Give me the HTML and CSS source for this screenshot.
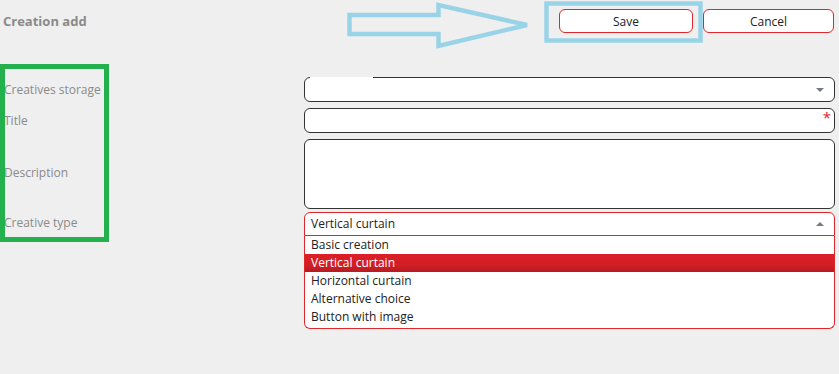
FILE: index.html
```html
<!DOCTYPE html>
<html lang="en">
<head>
  <meta charset="UTF-8">
  <title>Creation add</title>
  <link rel="stylesheet" href="styles.css">
</head>
<body>
  <div class="page">
    <header class="top">
      <h1>Creation add</h1>
      <div class="actions">
        <button class="btn">Save</button>
        <button class="btn">Cancel</button>
      </div>
    </header>

    <form class="form">
      <label class="label">Creatives storage</label>
      <div class="field select storage"><span class="arrow down"></span></div>

      <label class="label">Title</label>
      <div class="field input"><span class="required">*</span></div>

      <label class="label">Description</label>
      <div class="field textarea"></div>

      <label class="label label-top">Creative type</label>
      <div class="combo">
        <div class="field select open">Vertical curtain<span class="arrow up"></span></div>
        <ul class="options">
          <li>Basic creation</li>
          <li class="selected">Vertical curtain</li>
          <li>Horizontal curtain</li>
          <li>Alternative choice</li>
          <li>Button with image</li>
        </ul>
      </div>
    </form>

    <svg class="marks" width="839" height="374" viewBox="0 0 839 374">
      <polygon points="349.5,15 438.5,15 438.5,5 527,25 438.5,46 438.5,34 349.5,34" />
      <rect x="546.5" y="3.5" width="154" height="37" />
      <rect class="green" x="2.5" y="66.5" width="104" height="173" />
    </svg>
  </div>
</body>
</html>
```

FILE: styles.css
```css
body, html {
  margin: 0;
  padding: 0;
  background: #efefef;
  font-family: "Open Sans", "Liberation Sans", sans-serif;
  font-size: 12px;
  color: #222;
}

.page {
  position: relative;
  width: 839px;
  height: 374px;
  padding: 9px 4px 0 4px;
  box-sizing: border-box;
}

.top {
  display: flex;
  align-items: center;
  justify-content: space-between;
}

.top h1 {
  margin: 0 0 0 -1px;
  font-size: 13px;
  font-weight: bold;
  color: #8a8a8a;
}

.actions {
  display: flex;
  gap: 10px;
  margin-right: 1px;
}

.btn {
  height: 24px;
  width: 134px;
  padding: 0;
  border: 1px solid #e0252b;
  border-radius: 6px;
  background: #fff;
  font-family: inherit;
  font-size: 12px;
  color: #222;
}

.btn + .btn {
  width: 131px;
}

.form {
  display: grid;
  grid-template-columns: 300px 1fr;
  align-items: center;
  row-gap: 6px;
  margin-top: 44px;
}

.label {
  color: #8a8a8a;
}

.label-top {
  align-self: start;
  padding-top: 2px;
}

.field {
  position: relative;
  box-sizing: border-box;
  background: #fff;
  border: 1px solid #333;
  border-radius: 6px;
  height: 25px;
}

.storage::after {
  content: "";
  position: absolute;
  left: 5px;
  top: -1px;
  width: 63px;
  height: 1px;
  background: #fff;
}

.textarea {
  height: 70px;
  margin-bottom: -3px;
}

.select.open {
  height: 24px;
  border-color: #e0252b;
  border-radius: 6px 6px 0 0;
  padding-left: 6px;
  line-height: 21px;
}

.arrow {
  position: absolute;
  right: 10px;
  top: 10px;
  width: 0;
  height: 0;
  border-left: 4px solid transparent;
  border-right: 4px solid transparent;
}

.arrow.down {
  border-top: 4px solid #737984;
}

.arrow.up {
  top: 9px;
  border-bottom: 4px solid #737984;
}

.required {
  position: absolute;
  right: 3px;
  top: 0;
  color: #e0252b;
  font-size: 15px;
  line-height: 17px;
}

.options {
  list-style: none;
  margin: 0;
  padding: 0 0 2px 0;
  background: #fff;
  border: 1px solid #e0252b;
  border-top: none;
  border-radius: 0 0 6px 6px;
}

.options li {
  height: 18px;
  line-height: 18px;
  padding-left: 6px;
}

.options li.selected {
  background: linear-gradient(#dc1f27, #d21e25 60%, #b51c22);
  color: #fff;
}

.marks {
  position: absolute;
  left: 0;
  top: 0;
  pointer-events: none;
  fill: none;
}

.marks polygon,
.marks rect {
  stroke: #99d3e8;
  stroke-width: 4.5;
}

.marks rect.green {
  stroke: #22b14c;
  stroke-width: 5;
}
```
